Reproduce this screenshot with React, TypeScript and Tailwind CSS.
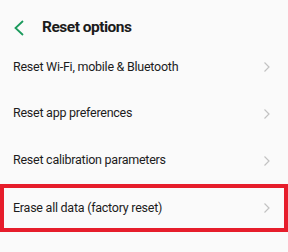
const ROWS = [
  { label: "Reset Wi-Fi, mobile & Bluetooth", h: "h-[46px]" },
  { label: "Reset app preferences", h: "h-[47px]" },
  { label: "Reset calibration parameters", h: "h-[47px]" },
];

function Chevron() {
  return (
    <svg width="8" height="12" viewBox="0 0 8 12" className="text-[#c2c2c2]">
      <polyline points="1.5,1.5 6,6 1.5,10.5" fill="none" stroke="currentColor" strokeWidth="1.2" />
    </svg>
  );
}

export default function App() {
  return (
    <div className="w-[288px] h-[252px] bg-[#fafafa] text-[#1c1c1c] overflow-hidden" style={{ fontFamily: "Roboto, 'Noto Sans', sans-serif" }}>
      {/* Header */}
      <div className="h-[44px] pt-[12px] flex items-center">
        <svg width="12" height="16" viewBox="0 0 12 16" className="ml-[13px] text-[#1a9a5c]">
          <polyline points="10,1 2.5,8 10,15" fill="none" stroke="currentColor" strokeWidth="1.8" />
        </svg>
        <h1 className="ml-[17px] text-[15.5px] font-bold leading-none tracking-[-0.5px]">Reset options</h1>
      </div>

      {ROWS.map(r => (
        <div key={r.label} className={`${r.h} flex items-center justify-between pl-[13px] pr-[17px]`}>
          <span className="text-[12.5px] tracking-[-0.25px]">{r.label}</span>
          <Chevron />
        </div>
      ))}

      {/* Highlighted row */}
      <div className="h-[48px] flex items-center justify-between pl-[9px] pr-[13px] border-4 border-[#e61d2b]">
        <span className="text-[12.5px] tracking-[-0.25px]">Erase all data (factory reset)</span>
        <Chevron />
      </div>
    </div>
  );
}
